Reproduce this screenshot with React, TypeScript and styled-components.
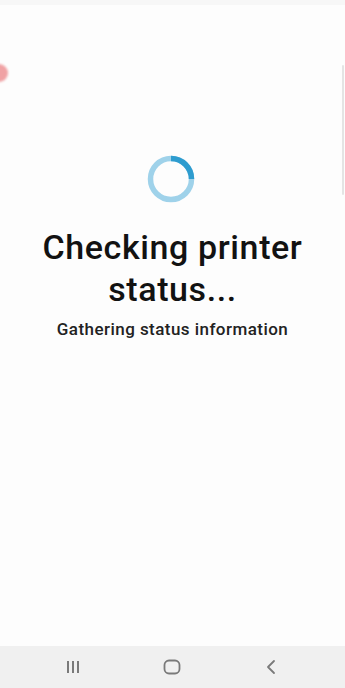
import styled, { createGlobalStyle } from "styled-components"

const GlobalStyle = createGlobalStyle`
  html, body {
    margin: 0;
    padding: 0;
    background: #fdfdfd;
  }
  * {
    box-sizing: border-box;
  }
`

const Screen = styled.div`
  width: 345px;
  height: 688px;
  display: flex;
  flex-direction: column;
  position: relative;
  overflow: hidden;
  background: #fdfdfd;
  font-family: Roboto, "Noto Sans", sans-serif;
  color: #111;
`

const TopStrip = styled.div`
  height: 5px;
  background: #f7f7f7;
`

const Content = styled.main`
  flex: 1;
  display: flex;
  flex-direction: column;
  align-items: center;
  padding-top: 149px;
`

const Spinner = styled.svg`
  width: 50px;
  height: 50px;
  margin-left: -3px;
`

const Title = styled.h1`
  margin: 22px 0 0;
  width: 300px;
  text-align: center;
  font-size: 34px;
  font-weight: 500;
  line-height: 42px;
  letter-spacing: 0.6px;
  color: #121212;
`

const Subtitle = styled.p`
  margin: 9px 0 0;
  font-size: 17px;
  font-weight: 500;
  line-height: 20px;
  letter-spacing: 0.45px;
  color: #222;
`

const FloatingDot = styled.div`
  position: absolute;
  left: -10px;
  top: 64px;
  width: 18px;
  height: 18px;
  border-radius: 50%;
  background: #f0a2a4;
  filter: blur(1px);
`

const ScrollThumb = styled.div`
  position: absolute;
  right: 1px;
  top: 65px;
  width: 2px;
  height: 130px;
  border-radius: 1px;
  background: #e4e4e4;
`

const NavBar = styled.nav`
  height: 42px;
  background: #f0f0f0;
  display: grid;
  grid-template-columns: repeat(3, 1fr);
  align-items: center;
  justify-items: center;
  padding: 0 25px 0 24px;
`

const NavIcon = styled.svg`
  width: 20px;
  height: 20px;
  color: #7a7a7a;
`

export default function App() {
  return (
    <>
      <GlobalStyle />
      <Screen>
        <TopStrip />
        <Content>
          <Spinner viewBox="0 0 50 50">
            <circle cx="25" cy="25" r="20.5" fill="none" stroke="#9fd2ea" strokeWidth="5.5" />
            <path d="M25 4.5 A20.5 20.5 0 0 1 45.5 25" fill="none" stroke="#2e9ccf" strokeWidth="5.5" />
          </Spinner>
          <Title>Checking printer status...</Title>
          <Subtitle>Gathering status information</Subtitle>
        </Content>
        <NavBar>
          <NavIcon viewBox="0 0 20 20">
            <path d="M5 4v12M10 4v12M15 4v12" stroke="currentColor" strokeWidth="2" fill="none" />
          </NavIcon>
          <NavIcon viewBox="0 0 20 20">
            <rect x="2.5" y="3.5" width="15" height="13" rx="4.5" stroke="currentColor" strokeWidth="1.8" fill="none" />
          </NavIcon>
          <NavIcon viewBox="0 0 20 20">
            <path d="M13 4 L7 10 L13 16" stroke="currentColor" strokeWidth="1.8" fill="none" strokeLinecap="round" strokeLinejoin="round" />
          </NavIcon>
        </NavBar>
        <FloatingDot />
        <ScrollThumb />
      </Screen>
    </>
  )
}
